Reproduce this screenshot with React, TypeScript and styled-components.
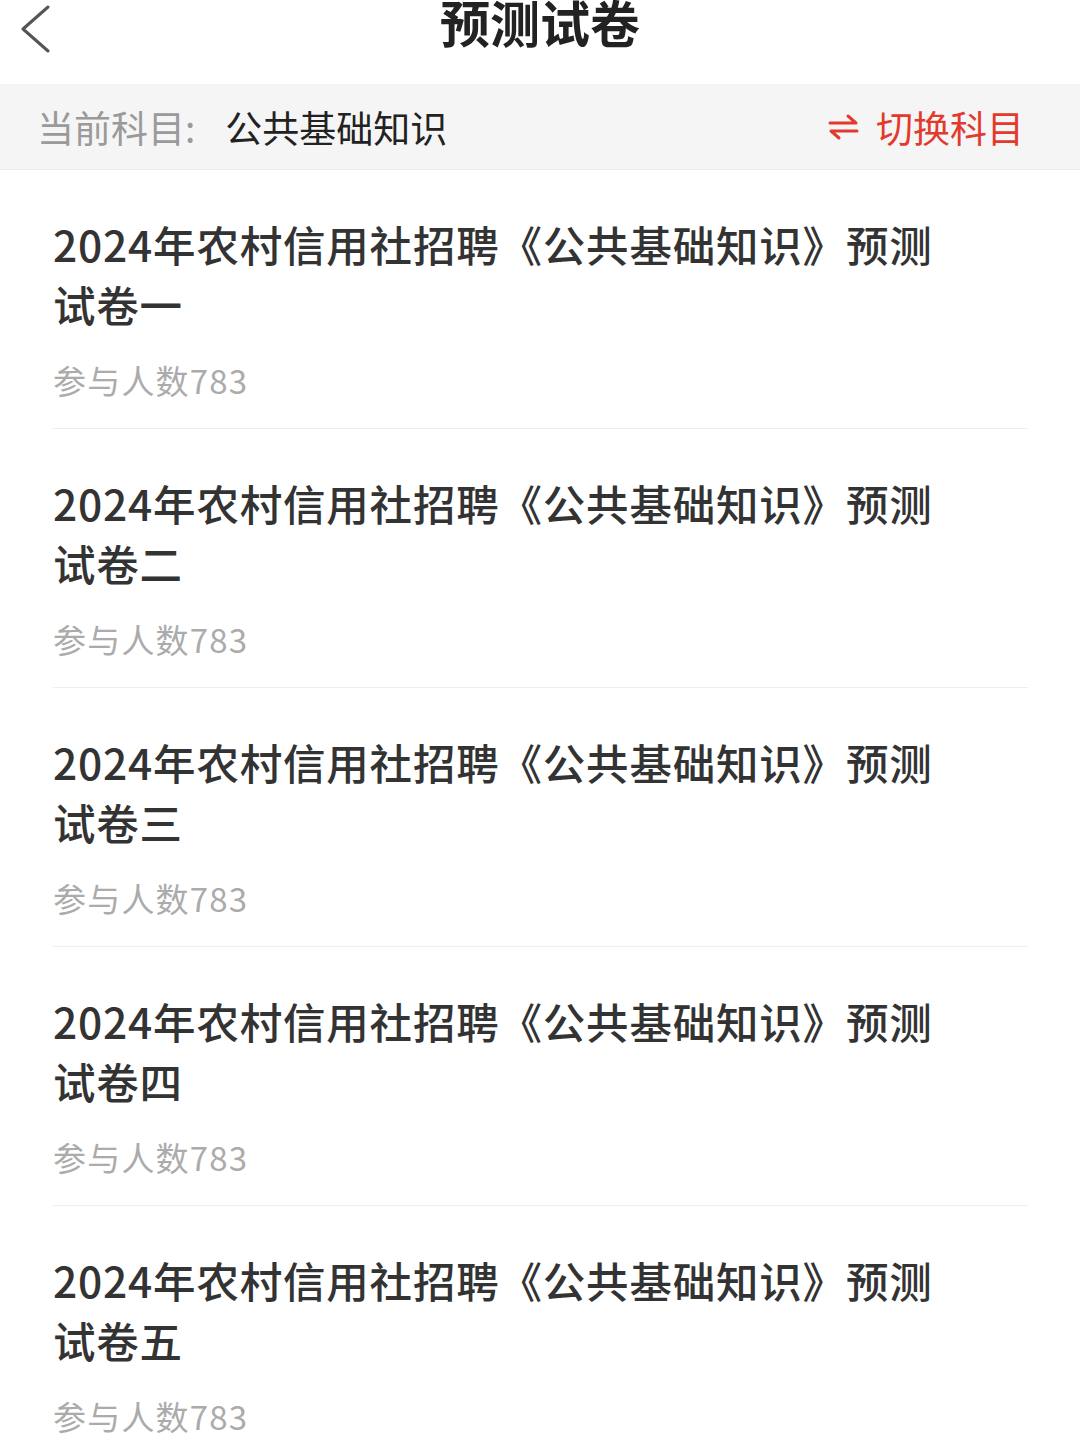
import styled, { createGlobalStyle } from "styled-components";

const GlobalStyle = createGlobalStyle`
    html, body {
        margin: 0;
        padding: 0;
        background: #ffffff;
        font-family: "Noto Sans CJK SC", "Noto Sans", sans-serif;
    }
`

const Page = styled.div`
    width: 1080px;
    min-height: 1440px;
    background: #ffffff;
    overflow: hidden;
`

const Header = styled.div`
    height: 84px;
    display: grid;
    grid-template-columns: 1fr auto 1fr;
    align-items: start;
    background: #ffffff;
`

const BackButton = styled.div`
    padding: 5px 0 0 20px;
    display: flex;
`

const Title = styled.h1`
    margin: -9px 0 0;
    font-size: 50px;
    line-height: 60px;
    font-weight: 700;
    color: #222222;
`

const SubjectBar = styled.div`
    height: 85px;
    display: flex;
    align-items: center;
    justify-content: space-between;
    padding: 0 56px 0 37px;
    background: #f5f5f5;
    border-bottom: 1px solid #ebebeb;
    font-size: 37px;
`

const SubjectInfo = styled.div`
    display: flex;
    align-items: center;
    gap: 30px;
`

const SubjectLabel = styled.span`
    color: #9a9a9a;
`

const SubjectName = styled.span`
    color: #222222;
`

const SwitchButton = styled.div`
    display: flex;
    align-items: center;
    gap: 17px;
    color: #e23b2e;
`

const List = styled.div`
    padding: 0 52px 0 53px;
`

const Item = styled.div`
    padding: 44px 0 28px;
    border-bottom: 1px solid #eeeeee;
`

const ItemTitle = styled.div`
    max-width: 890px;
    font-size: 42.5px;
    line-height: 60px;
    letter-spacing: 0.8px;
    font-weight: 500;
    color: #333333;
`

const ItemMeta = styled.div`
    margin-top: 26px;
    font-size: 33px;
    line-height: 40px;
    letter-spacing: 1.2px;
    color: #ababab;
`

const papers = ["一", "二", "三", "四", "五"]

export default function App() {
    return (
        <Page>
            <GlobalStyle/>
            <Header>
                <BackButton>
                    <svg width="34" height="52" viewBox="0 0 34 52" fill="none">
                        <path d="M28 2 L3 24 L28 46" stroke="#555555" strokeWidth="3" strokeLinecap="round" strokeLinejoin="round"/>
                    </svg>
                </BackButton>
                <Title>预测试卷</Title>
                <div/>
            </Header>
            <SubjectBar>
                <SubjectInfo>
                    <SubjectLabel>当前科目:</SubjectLabel>
                    <SubjectName>公共基础知识</SubjectName>
                </SubjectInfo>
                <SwitchButton>
                    <svg width="31" height="30" viewBox="0 0 31 30" fill="none">
                        <path d="M2 11 H28 L20 4" stroke="#e23b2e" strokeWidth="3" strokeLinecap="round" strokeLinejoin="round"/>
                        <path d="M29 19 H3 L11 26" stroke="#e23b2e" strokeWidth="3" strokeLinecap="round" strokeLinejoin="round"/>
                    </svg>
                    <span>切换科目</span>
                </SwitchButton>
            </SubjectBar>
            <List>
                {papers.map((n) => (
                    <Item key={n}>
                        <ItemTitle>2024年农村信用社招聘《公共基础知识》预测试卷{n}</ItemTitle>
                        <ItemMeta>参与人数783</ItemMeta>
                    </Item>
                ))}
            </List>
        </Page>
    )
}
